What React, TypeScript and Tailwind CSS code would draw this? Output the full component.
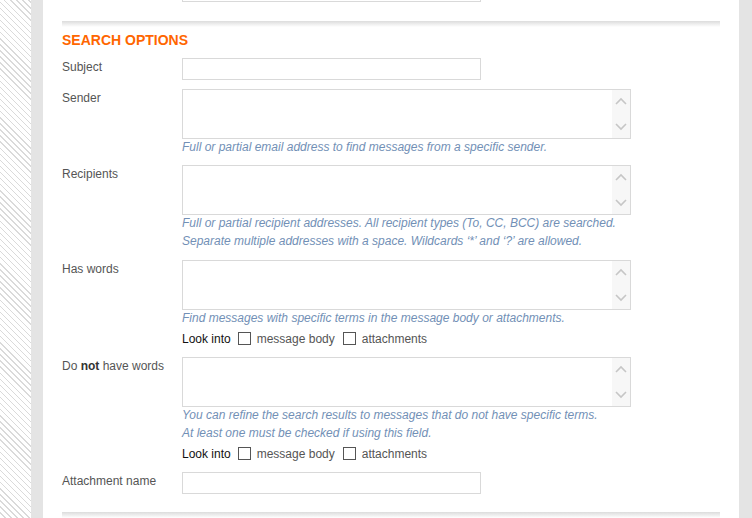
import React from 'react';

const Chevrons = () => (
  <div className="absolute right-0 top-0 bottom-0 w-[18px] bg-[#f7f7f7] flex flex-col items-center justify-between py-[7px]">
    <svg width="12" height="8" viewBox="0 0 12 8" fill="none" stroke="#c6c6c6" strokeWidth="1.6">
      <path d="M1 7 L6 2 L11 7" />
    </svg>
    <svg width="12" height="8" viewBox="0 0 12 8" fill="none" stroke="#c6c6c6" strokeWidth="1.6">
      <path d="M1 1 L6 6 L11 1" />
    </svg>
  </div>
);

const TextBox = () => (
  <div className="relative w-[449px] h-[50px] border border-[#d9d9d9] bg-white">
    <Chevrons />
  </div>
);

const Input = () => <div className="w-[299px] h-[22px] border border-[#d9d9d9] bg-white" />;

const Hints = ({ lines }: { lines: string[] }) => (
  <div className="-mt-[1px] italic text-[12px] leading-[18px] text-[#7290b6]">
    {lines.map((l) => (
      <p key={l}>{l}</p>
    ))}
  </div>
);

const LookInto = () => (
  <div className="flex items-center h-[20px] text-[12px] mt-[2px]">
    <span className="text-[#111]">Look into</span>
    <span className="ml-[7px] w-[13px] h-[13px] border border-[#555] bg-white" />
    <span className="ml-[6px] text-[#555]">message body</span>
    <span className="ml-[8px] w-[13px] h-[13px] border border-[#555] bg-white" />
    <span className="ml-[6px] text-[#555]">attachments</span>
  </div>
);

const Row = ({ label, children, className = '' }: { label: React.ReactNode; children: React.ReactNode; className?: string }) => (
  <div className={`flex ${className}`}>
    <div className="w-[120px] shrink-0 pt-[2px] text-[12px] leading-[14px] text-[#555]">{label}</div>
    <div className="flex flex-col">{children}</div>
  </div>
);

export default function App() {
  return (
    <div className="flex w-[752px] h-[518px] overflow-hidden bg-white font-['Liberation_Sans',Arial,sans-serif]">
      <div className="w-[31px] shrink-0 bg-[repeating-linear-gradient(45deg,#ffffff_0px,#ffffff_3.3px,#dadada_3.3px,#dadada_4.3px)]" />
      <div className="w-[12px] shrink-0 bg-[#e4e4e4]" />
      <div className="flex-1 flex flex-col pl-[19px] pr-[19px]">
        <div className="ml-[120px] w-[299px] h-[2px] border-x border-b border-[#d9d9d9]" />
        <div className="mt-[19px] h-[9px] bg-gradient-to-b from-[#dcdcdc] to-white" />
        <h2 className="mt-[5px] text-[14px] leading-[16px] font-bold text-[#ff6600]">SEARCH OPTIONS</h2>

        <Row label="Subject" className="mt-[10px]">
          <Input />
        </Row>

        <Row label="Sender" className="mt-[9px]">
          <TextBox />
          <Hints lines={['Full or partial email address to find messages from a specific sender.']} />
        </Row>

        <Row label="Recipients" className="mt-[9px]">
          <TextBox />
          <Hints
            lines={[
              'Full or partial recipient addresses. All recipient types (To, CC, BCC) are searched.',
              'Separate multiple addresses with a space. Wildcards ‘*’ and ‘?’ are allowed.',
            ]}
          />
        </Row>

        <Row label="Has words" className="mt-[10px]">
          <TextBox />
          <Hints lines={['Find messages with specific terms in the message body or attachments.']} />
          <LookInto />
        </Row>

        <Row
          label={
            <>
              Do <b className="text-[#333]">not</b> have words
            </>
          }
          className="mt-[8px]"
        >
          <TextBox />
          <Hints
            lines={[
              'You can refine the search results to messages that do not have specific terms.',
              'At least one must be checked if using this field.',
            ]}
          />
          <LookInto />
        </Row>

        <Row label="Attachment name" className="mt-[8px]">
          <Input />
        </Row>

        <div className="mt-[18px] h-[9px] bg-gradient-to-b from-[#dcdcdc] to-white" />
      </div>
      <div className="w-[13px] shrink-0 bg-[#e4e4e4]" />
    </div>
  );
}
